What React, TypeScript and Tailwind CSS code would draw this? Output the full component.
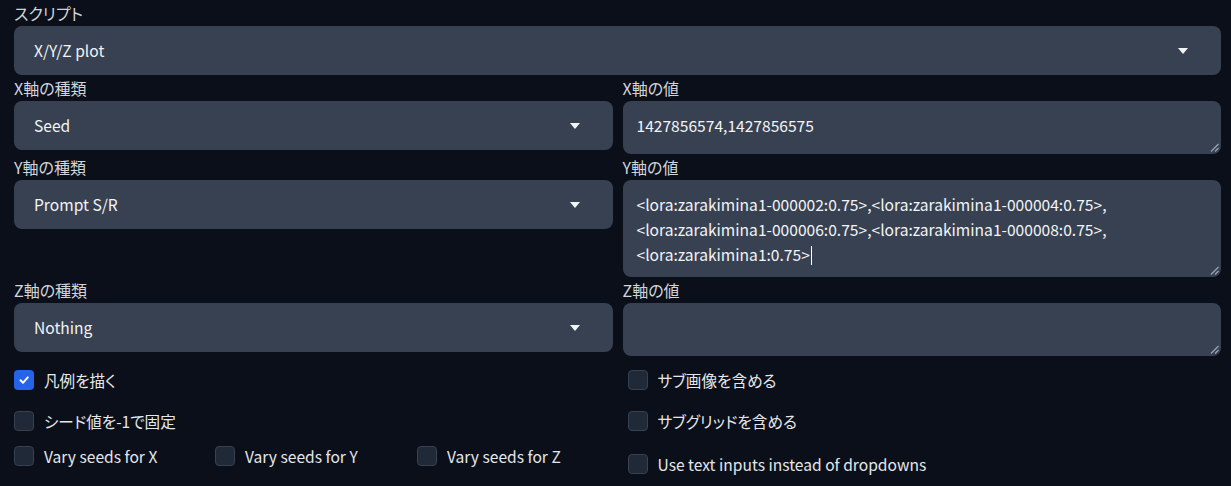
import React from "react";

const FONT =
  "font-['Noto_Sans_CJK_JP','Noto_Sans',sans-serif] [font-feature-settings:'palt']";

function Label({ children }: { children: React.ReactNode }) {
  return (
    <div className="h-[26px] pt-[3px] text-[16px] leading-[21px] text-[#d1d5db]">
      {children}
    </div>
  );
}

function Arrow() {
  return (
    <svg width="10" height="6" viewBox="0 0 10 6" className="shrink-0">
      <path d="M0 0 L10 0 L5 6 Z" fill="#f3f4f6" />
    </svg>
  );
}

function Dropdown({ value }: { value: string }) {
  return (
    <div className="flex h-[49px] items-center justify-between rounded-lg bg-[#374151] pl-[20px] pr-[33px] text-[15.6px] text-[#f3f4f6]">
      <span>{value}</span>
      <Arrow />
    </div>
  );
}

function Handle() {
  return (
    <svg
      width="9"
      height="9"
      viewBox="0 0 9 9"
      className="absolute bottom-[2px] right-[2px]"
    >
      <path d="M8.5 1 L1 8.5 M8.5 5 L5 8.5" stroke="#9ca3af" strokeWidth="1.2" />
    </svg>
  );
}

function TextArea({
  lines,
  height,
  caret,
}: {
  lines: string[];
  height: string;
  caret?: boolean;
}) {
  return (
    <div
      className={`relative rounded-lg bg-[#374151] px-[14px] pt-[12px] text-[15.6px] leading-[25px] text-[#f3f4f6] ${height}`}
    >
      {lines.map((l, i) => (
        <div key={i} className="whitespace-nowrap">
          {l}
          {caret && i === lines.length - 1 ? (
            <span className="ml-[1px] inline-block h-[19px] w-[1px] translate-y-[4px] bg-white align-baseline" />
          ) : null}
        </div>
      ))}
      <Handle />
    </div>
  );
}

function Check({
  label,
  checked,
  className = "",
}: {
  label: string;
  checked?: boolean;
  className?: string;
}) {
  return (
    <div className={`flex h-[20px] items-center gap-[10px] ${className}`}>
      {checked ? (
        <div className="flex h-[20px] w-[20px] items-center justify-center rounded-[4px] bg-[#2563eb]">
          <svg width="12" height="12" viewBox="0 0 12 12">
            <path
              d="M2.5 6.3 L5 8.8 L9.8 3.4"
              fill="none"
              stroke="white"
              strokeWidth="2"
              strokeLinecap="round"
              strokeLinejoin="round"
            />
          </svg>
        </div>
      ) : (
        <div className="h-[20px] w-[20px] rounded-[4px] border border-[#374151] bg-[#1f2937]" />
      )}
      <span className="whitespace-nowrap text-[15.6px] leading-[20px] text-[#e5e7eb]">
        {label}
      </span>
    </div>
  );
}

export default function App() {
  return (
    <div className={`min-h-[486px] w-full bg-[#0b0f19] pl-[14px] pr-[10px] ${FONT}`}>
      <Label>スクリプト</Label>
      <Dropdown value="X/Y/Z plot" />

      <div className="grid grid-cols-2 gap-x-[10px]">
        <div>
          <Label>X軸の種類</Label>
          <Dropdown value="Seed" />
        </div>
        <div>
          <Label>X軸の値</Label>
          <TextArea lines={["1427856574,1427856575"]} height="h-[53px]" />
        </div>

        <div>
          <Label>Y軸の種類</Label>
          <Dropdown value="Prompt S/R" />
        </div>
        <div>
          <Label>Y軸の値</Label>
          <TextArea
            lines={[
              "<lora:zarakimina1-000002:0.75>,<lora:zarakimina1-000004:0.75>,",
              "<lora:zarakimina1-000006:0.75>,<lora:zarakimina1-000008:0.75>,",
              "<lora:zarakimina1:0.75>",
            ]}
            height="h-[97px]"
            caret
          />
        </div>

        <div>
          <Label>Z軸の種類</Label>
          <Dropdown value="Nothing" />
        </div>
        <div>
          <Label>Z軸の値</Label>
          <TextArea lines={[]} height="h-[53px]" />
        </div>

        <div className="flex flex-col pt-[14px]">
          <Check label="凡例を描く" checked />
          <Check label="シード値を-1で固定" className="mt-[21px]" />
          <div className="mt-[15px] flex">
            <Check label="Vary seeds for X" className="w-[201px]" />
            <Check label="Vary seeds for Y" className="w-[202px]" />
            <Check label="Vary seeds for Z" />
          </div>
        </div>
        <div className="flex flex-col pl-[5px] pt-[14px]">
          <Check label="サブ画像を含める" />
          <Check label="サブグリッドを含める" className="mt-[21px]" />
          <Check label="Use text inputs instead of dropdowns" className="mt-[23px]" />
        </div>
      </div>
    </div>
  );
}
